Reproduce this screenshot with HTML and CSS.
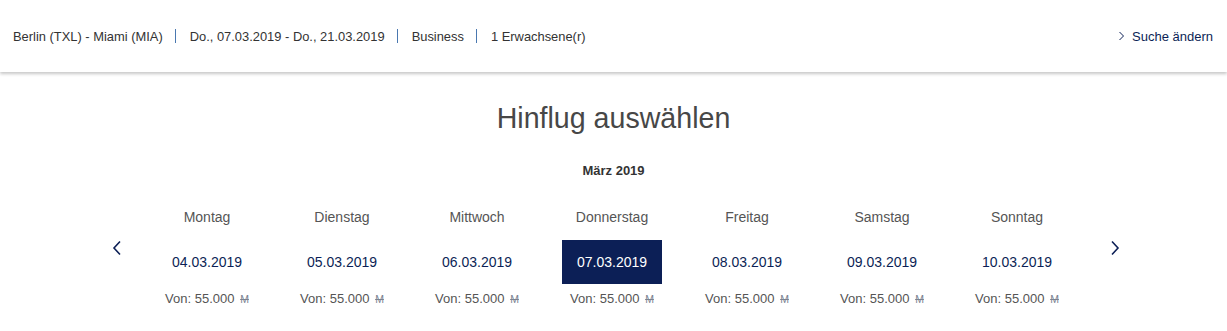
FILE: index.html
```html
<!DOCTYPE html>
<html>
<head>
    <meta charset="utf-8">
    <title>Hinflug auswählen</title>
    <link rel="stylesheet" href="styles.css">
</head>
<body>
    <header class="summary">
        <div class="summary-info">
            <span>Berlin (TXL) - Miami (MIA)</span>
            <span class="sep"></span>
            <span>Do., 07.03.2019 - Do., 21.03.2019</span>
            <span class="sep"></span>
            <span>Business</span>
            <span class="sep"></span>
            <span>1 Erwachsene(r)</span>
        </div>
        <a class="change-search" href="#">
            <svg width="7" height="10" viewBox="0 0 7 10"><path d="M1.5 1l4 4-4 4" fill="none" stroke="#0c1f56" stroke-width="1"/></svg>
            Suche ändern
        </a>
    </header>

    <main class="content">
        <h1 class="title">Hinflug auswählen</h1>
        <div class="month">März 2019</div>

        <div class="week">
            <button class="nav prev">
                <svg width="10" height="16" viewBox="0 0 10 16"><path d="M8 1.5L2 8l6 6.5" fill="none" stroke="#0c1f56" stroke-width="1.6"/></svg>
            </button>
            <div class="days">
                <div class="day">
                    <div class="day-name">Montag</div>
                    <div class="day-date">04.03.2019</div>
                    <div class="day-price">Von: 55.000 <span class="miles">M</span></div>
                </div>
                <div class="day">
                    <div class="day-name">Dienstag</div>
                    <div class="day-date">05.03.2019</div>
                    <div class="day-price">Von: 55.000 <span class="miles">M</span></div>
                </div>
                <div class="day">
                    <div class="day-name">Mittwoch</div>
                    <div class="day-date">06.03.2019</div>
                    <div class="day-price">Von: 55.000 <span class="miles">M</span></div>
                </div>
                <div class="day">
                    <div class="day-name">Donnerstag</div>
                    <div class="day-date selected">07.03.2019</div>
                    <div class="day-price">Von: 55.000 <span class="miles">M</span></div>
                </div>
                <div class="day">
                    <div class="day-name">Freitag</div>
                    <div class="day-date">08.03.2019</div>
                    <div class="day-price">Von: 55.000 <span class="miles">M</span></div>
                </div>
                <div class="day">
                    <div class="day-name">Samstag</div>
                    <div class="day-date">09.03.2019</div>
                    <div class="day-price">Von: 55.000 <span class="miles">M</span></div>
                </div>
                <div class="day">
                    <div class="day-name">Sonntag</div>
                    <div class="day-date">10.03.2019</div>
                    <div class="day-price">Von: 55.000 <span class="miles">M</span></div>
                </div>
            </div>
            <button class="nav next">
                <svg width="10" height="16" viewBox="0 0 10 16"><path d="M2 1.5L8 8l-6 6.5" fill="none" stroke="#0c1f56" stroke-width="1.6"/></svg>
            </button>
        </div>
    </main>
</body>
</html>
```

FILE: styles.css
```css
body {
    font-family: "Liberation Sans", Arial, sans-serif;
    margin: 0;
    color: #333;
    background: #fff;
}

.summary {
    height: 72px;
    display: flex;
    align-items: center;
    justify-content: space-between;
    padding: 0 14px 0 13px;
    box-shadow: 0 2px 3px rgba(0, 0, 0, 0.22);
    font-size: 12.9px;
}

.summary-info {
    display: flex;
    align-items: center;
    color: #333;
}

.summary-info .sep {
    width: 1px;
    height: 14px;
    background: #4a78b0;
    margin: 0 14px 0 12px;
}

.change-search {
    display: flex;
    align-items: center;
    gap: 7px;
    color: #0c1f56;
    text-decoration: none;
    font-size: 13px;
}

.content {
    text-align: center;
}

.title {
    font-size: 28.6px;
    font-weight: normal;
    color: #474747;
    margin: 29px 0 0;
    line-height: 34px;
}

.month {
    font-size: 13px;
    font-weight: bold;
    color: #333;
    margin-top: 28px;
}

.week {
    display: flex;
    justify-content: center;
    align-items: flex-start;
    margin-top: 31px;
}

.nav {
    border: none;
    background: none;
    padding: 0;
    margin-top: 30px;
    width: 20px;
    height: 20px;
    cursor: pointer;
}

.nav.prev {
    margin-left: 4px;
}

.days {
    display: flex;
    margin: 0 20px 0 13px;
}

.day {
    width: 135px;
    display: flex;
    flex-direction: column;
    align-items: center;
}

.day-name {
    font-size: 14px;
    color: #555;
    line-height: 16px;
}

.day-date {
    margin-top: 15px;
    width: 100px;
    height: 44px;
    line-height: 44px;
    font-size: 14px;
    color: #0c1f56;
}

.day-date.selected {
    background: #0c1f56;
    color: #fff;
}

.day-price {
    margin-top: 7px;
    font-size: 13px;
    color: #555;
}

.miles {
    font-size: 10.5px;
    color: #7a8290;
    text-decoration: line-through;
    margin-left: 2px;
}
```
